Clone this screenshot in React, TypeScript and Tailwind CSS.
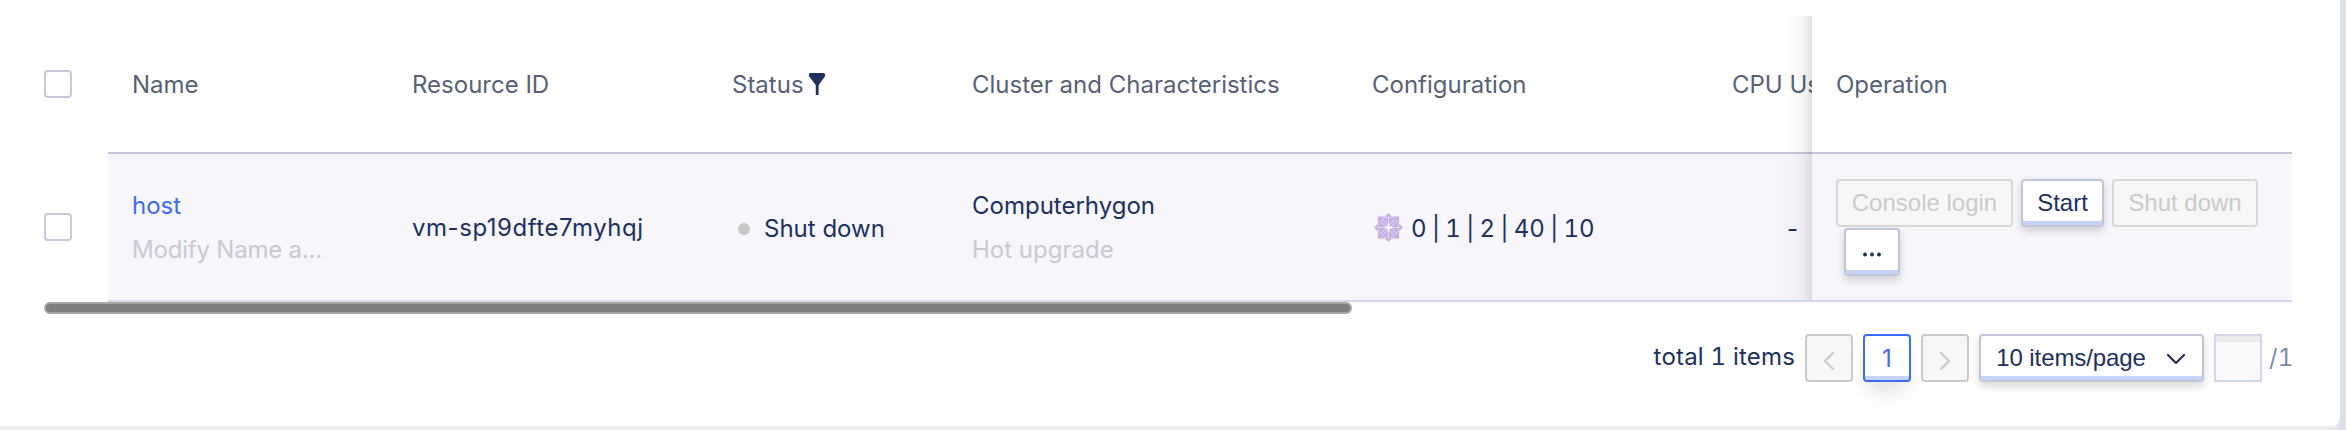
import type { ReactNode } from "react";

const columns =
  "grid grid-cols-[64px_280px_320px_240px_400px_360px_104px_480px]";

function Checkbox() {
  return <span className="block h-7 w-7 rounded-[4px] border-2 border-[#c6cadb] bg-white" />;
}

function HeadCell({ children }: { children: ReactNode }) {
  return (
    <div className="flex items-center overflow-hidden border-b-2 border-[#c1c6da] pt-[2px] pl-6 whitespace-nowrap text-[#566276]">
      {children}
    </div>
  );
}

function Cell({ children }: { children: ReactNode }) {
  return (
    <div className="flex flex-col justify-center overflow-hidden border-b-2 border-[#d2d7ea] bg-[#f6f6fb] pl-6 whitespace-nowrap">
      {children}
    </div>
  );
}

function FilterIcon() {
  return (
    <svg className="ml-[5px] -mt-[3px] h-[22px] w-4" viewBox="0 0 16 22" fill="#20305f">
      <path d="M1 0h14q1 .4 1 1.4v1.800L10.400 11Q9.600 12 9.600 13v9H6.800v-9q0-1-.8-2L0 3.200V1.400Q0 .4 1 0z" />
    </svg>
  );
}

function FlowerIcon() {
  return (
    <svg className="-mt-[2px] mr-[8px] h-[29px] w-[29px]" viewBox="0 0 30 30">
      <path d="M15 0l3.500 3.500H26v7.500l4 4-4 4v7.500h-7.500L15 30l-3.500-3.500H4V19l-4-4 4-4V3.500h7.500z" fill="#c6b0e3" />
      <path
        d="M6 8l16 16M8 6l16 16M24 8L8 24M22 6L6 22M15 4v22M4 15h22"
        stroke="#ece4f7"
        strokeWidth=".9"
        fill="none"
      />
      <path
        d="M9.500 4.500h11M9.500 25.500h11M4.500 9.500v11M25.500 9.500v11"
        stroke="#e2d5f1"
        strokeWidth="1"
        fill="none"
      />
      <path d="M15 10l1.400 3.600L20 15l-3.600 1.400L15 20l-1.400-3.600L10 15l3.600-1.400z" fill="#fff" opacity=".85" />
    </svg>
  );
}

function Chevron({ d, className }: { d: string; className: string }) {
  return (
    <svg className={className} viewBox="0 0 18 18" fill="none" stroke="currentColor" strokeWidth="2.200" strokeLinecap="round" strokeLinejoin="round">
      <path d={d} />
    </svg>
  );
}

const raised =
  "rounded-[4px] border-2 border-[#c1c6da] bg-white text-[#20305f] shadow-[inset_0_-4px_0_#c5d3f6,0_4px_8px_rgba(0,0,0,0.16)]";
const disabled = "rounded-[4px] border-2 border-[#d9d9d9] bg-[#f7f7f7] text-[#cbcbcb]";
const button =
  "flex h-12 items-center justify-center font-['Liberation_Sans',Arial,sans-serif] text-2xl leading-none";

export default function App() {
  return (
    <div className="flex h-[430px] w-[2346px] overflow-hidden bg-[linear-gradient(to_right,#ebebeb_2334px,#dddfe9_2342px)] font-[Inter,sans-serif] text-2xl leading-[30px] font-normal text-[#20305f]">
      <div className="h-[426px] w-[2340px] rounded-br-[8px] bg-white pt-4 pl-11">
        <div className="relative w-[2248px]">
          <div className={`${columns} h-[138px]`}>
            <div className="flex items-center pb-[2px]">
              <Checkbox />
            </div>
            <HeadCell>Name</HeadCell>
            <HeadCell>Resource ID</HeadCell>
            <HeadCell>
              Status
              <FilterIcon />
            </HeadCell>
            <HeadCell>Cluster and Characteristics</HeadCell>
            <HeadCell>Configuration</HeadCell>
            <HeadCell>CPU Us</HeadCell>
            <HeadCell>Operation</HeadCell>
          </div>
          <div className={`${columns} h-[148px]`}>
            <div className="flex items-center pb-[2px]">
              <Checkbox />
            </div>
            <Cell>
              <div className="flex flex-col gap-[14px] pt-[2px]">
                <span className="text-[#3d6bf7]">host</span>
                <span className="tracking-[-0.2px] text-[#c9cad5]">Modify Name a...</span>
              </div>
            </Cell>
            <Cell>
              <span className="pt-[2px] tracking-[0.54px]">vm-sp19dfte7myhqj</span>
            </Cell>
            <Cell>
              <div className="flex items-center pt-[3px]">
                <i className="mr-[14px] ml-[6px] h-3 w-3 rounded-full bg-[#c8c8c8]" />
                Shut down
              </div>
            </Cell>
            <Cell>
              <div className="flex flex-col gap-[14px] pt-[2px]">
                <span>Computerhygon</span>
                <span className="text-[#c9cad5]">Hot upgrade</span>
              </div>
            </Cell>
            <Cell>
              <div className="flex items-center pt-[3px] pl-[2px]">
                <FlowerIcon />
                <span className="tabular-nums [word-spacing:-1.1px]">0 | 1 | 2 | 40 | 10</span>
              </div>
            </Cell>
            <Cell>
              <span className="pt-[3px] pl-[55px]">-</span>
            </Cell>
            <Cell>
              <div className="flex flex-col gap-[1px]">
                <div className="flex gap-2">
                  <div className={`${button} ${disabled} w-[177px]`}>Console login</div>
                  <div className={`${button} ${raised} w-[83px]`}>Start</div>
                  <div className={`${button} ${disabled} w-[146px]`}>Shut down</div>
                </div>
                <div className={`${button} ${raised} ml-2 w-14`}>
                  <svg className="mt-[6px] h-[5px] w-5" viewBox="0 0 20 5" fill="#20305f">
                    <circle cx="3" cy="2.500" r="2" />
                    <circle cx="10" cy="2.500" r="2" />
                    <circle cx="17" cy="2.500" r="2" />
                  </svg>
                </div>
              </div>
            </Cell>
          </div>
          <div className="absolute top-0 left-[1728px] h-[284px] w-10 bg-[linear-gradient(to_right,transparent,rgba(0,0,0,0.01)_50%,rgba(0,0,0,0.04)_78%,rgba(0,0,0,0.11))]" />
        </div>

        <div className="h-3 w-[1308px] rounded-full border-2 border-[#a5a5a5] bg-[#7f7f7f]" />

        <div className="mt-5 flex w-[2248px] items-center justify-end">
          <span className="mr-[10px] -mt-[2px] tracking-[0.2px] tabular-nums">total 1 items</span>
          <div className={`${button} w-12 rounded-[4px] border-2 border-[#cacaca] bg-[#f7f7f7] text-[#cbcbcb]`}>
            <Chevron d="M13 1L5 9l8 8" className="mt-[6px] h-[18px] w-[18px]" />
          </div>
          <div className="ml-[10px] flex h-12 w-12 items-center justify-center rounded-[4px] border-2 border-[#3d6bf7] bg-white pt-[2px] text-[#3d6bf7] shadow-[inset_0_-4px_0_#c5d3f6,0_16px_20px_-6px_rgba(0,0,0,0.12)]">
            1
          </div>
          <div className={`${button} ml-[10px] w-12 rounded-[4px] border-2 border-[#cacaca] bg-[#f7f7f7] text-[#cbcbcb]`}>
            <Chevron d="M5 1l8 8-8 8" className="mt-[6px] h-[18px] w-[18px]" />
          </div>
          <div className={`${button} ${raised} ml-[10px] w-[225px] pr-[2px] tracking-[-0.1px]`}>
            10 items/page
            <Chevron d="M1 5l8 8 8-8" className="mt-[2px] ml-[21px] h-[18px] w-[18px]" />
          </div>
          <div className="ml-[10px] h-12 w-12 border-2 border-[#d2d7ea] bg-[#fafafd] shadow-[inset_0_6px_0_#ececee]" />
          <span className="ml-[7px] w-[23px] text-[#7f8bad] tabular-nums">/1</span>
        </div>
      </div>
    </div>
  );
}
